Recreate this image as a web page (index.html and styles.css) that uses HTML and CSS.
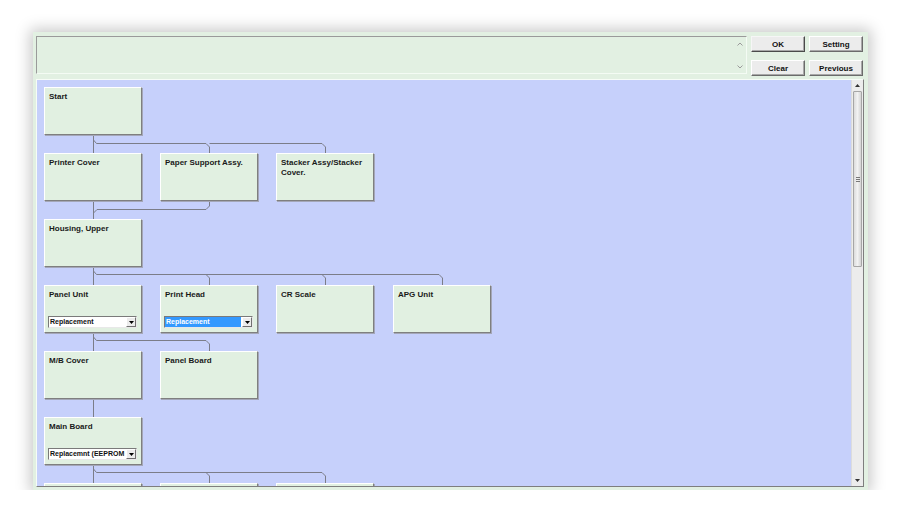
FILE: index.html
```html
<!DOCTYPE html>
<html>
<head>
<meta charset="utf-8">
<link rel="stylesheet" href="styles.css">
</head>
<body>
<div class="window">
  <div class="top-row">
    <div class="msg-box">
      <div class="msg-arrows">
        <svg width="6" height="4" viewBox="0 0 6 4"><path d="M0.5,3.5 L3,1 L5.5,3.5" fill="none" stroke="#9a9a9a" stroke-width="1"/></svg>
        <svg width="6" height="4" viewBox="0 0 6 4"><path d="M0.5,0.5 L3,3 L5.5,0.5" fill="none" stroke="#9a9a9a" stroke-width="1"/></svg>
      </div>
    </div>
    <div class="btn-grid">
      <button class="btn btn-default">OK</button>
      <button class="btn">Setting</button>
      <button class="btn">Clear</button>
      <button class="btn">Previous</button>
    </div>
  </div>
  <div class="canvas-frame">
    <div class="canvas">
      <svg class="links" width="814" height="406" viewBox="0 0 814 406">
        <g fill="none" stroke="#7b7d88" stroke-width="1">
          <path d="M56.5,55 V73 M56.5,60 L59.5,63.5 H169 L172.5,67 V73 M172.5,63.5 H285 L288.5,67 V73"/>
          <path d="M56.5,121 V139 M172.5,121 V126 L169,129.5 H60 L56.5,133"/>
          <path d="M56.5,187 V205 M56.5,191 L59.5,194.5 H402 L405.5,198 V205 M169,194.5 L172.5,198 V205 M285,194.5 L288.5,198 V205"/>
          <path d="M56.5,253 V271 M56.5,257 L59.5,260.5 H169 L172.5,264 V271"/>
          <path d="M56.5,319 V337"/>
          <path d="M56.5,385 V403 M56.5,389 L59.5,392.5 H169 L172.5,396 V403 M169,392.5 H285 L288.5,396 V403"/>
        </g>
      </svg>

      <div class="node c0 r0"><span class="label">Start</span></div>

      <div class="node c0 r1"><span class="label">Printer Cover</span></div>
      <div class="node c1 r1"><span class="label">Paper Support Assy.</span></div>
      <div class="node c2 r1"><span class="label">Stacker Assy/Stacker Cover.</span></div>

      <div class="node c0 r2"><span class="label">Housing, Upper</span></div>

      <div class="node c0 r3"><span class="label">Panel Unit</span>
        <div class="combo"><span class="combo-text">Replacement</span><span class="combo-btn"><svg width="5" height="3" viewBox="0 0 5 3"><path d="M0,0 H5 L2.5,3 Z" fill="#000"/></svg></span></div>
      </div>
      <div class="node c1 r3"><span class="label">Print Head</span>
        <div class="combo"><span class="combo-text selected">Replacement</span><span class="combo-btn"><svg width="5" height="3" viewBox="0 0 5 3"><path d="M0,0 H5 L2.5,3 Z" fill="#000"/></svg></span></div>
      </div>
      <div class="node c2 r3"><span class="label">CR Scale</span></div>
      <div class="node c3 r3"><span class="label">APG Unit</span></div>

      <div class="node c0 r4"><span class="label">M/B Cover</span></div>
      <div class="node c1 r4"><span class="label">Panel Board</span></div>

      <div class="node c0 r5"><span class="label">Main Board</span>
        <div class="combo"><span class="combo-text">Replacemnt (EEPROM Copy)</span><span class="combo-btn"><svg width="5" height="3" viewBox="0 0 5 3"><path d="M0,0 H5 L2.5,3 Z" fill="#000"/></svg></span></div>
      </div>

      <div class="node c0 r6"></div>
      <div class="node c1 r6"></div>
      <div class="node c2 r6"></div>
    </div>
    <div class="vscroll">
      <div class="arrow"><svg width="5" height="3" viewBox="0 0 5 3"><path d="M0,3 H5 L2.5,0 Z" fill="#333"/></svg></div>
      <div class="thumb"><span class="grip"></span></div>
      <div class="track-rest"></div>
      <div class="arrow"><svg width="5" height="3" viewBox="0 0 5 3"><path d="M0,0 H5 L2.5,3 Z" fill="#333"/></svg></div>
    </div>
  </div>
</div>
</body>
</html>
```

FILE: styles.css
```css
* { box-sizing: border-box; }

html, body {
  margin: 0;
  background: #ffffff;
}

body {
  padding: 32px 0 0 33px;
  font-family: "Liberation Sans", Arial, sans-serif;
}

.window {
  width: 835px;
  height: 458px;
  background: #e2f0e2;
  padding: 4px 4px 3px 3px;
  display: flex;
  flex-direction: column;
  gap: 3px;
  box-shadow: 0 0 14px 3px rgba(0, 0, 0, 0.22);
}

.top-row {
  display: flex;
  height: 40px;
  gap: 4px;
}

.msg-box {
  width: 711px;
  height: 38px;
  background: #e2f0e2;
  border: 1px solid;
  border-color: #9a9a9a #f4fbf4 #f4fbf4 #9a9a9a;
  display: flex;
  justify-content: flex-end;
}

.msg-arrows {
  width: 10px;
  display: flex;
  flex-direction: column;
  justify-content: space-between;
  align-items: center;
  padding: 5px 0 4px;
  margin-right: 1px;
}

.msg-arrows svg { display: block; }

.btn-grid {
  display: grid;
  grid-template-columns: 54px 54px;
  grid-template-rows: 16px 16px;
  column-gap: 4px;
  row-gap: 8px;
}

.btn {
  margin: 0;
  padding: 0;
  width: 54px;
  height: 16px;
  background: #ececec;
  border: 1px solid;
  border-color: #ffffff #6b6b6b #6b6b6b #ffffff;
  box-shadow: inset -1px -1px 0 #a8a8a8;
  font-family: "Liberation Sans", Arial, sans-serif;
  font-weight: bold;
  font-size: 8px;
  line-height: 13px;
  color: #111;
  text-align: center;
}

.btn-default {
  border-color: #f6f6f6 #4a4a4a #4a4a4a #f6f6f6;
}

.canvas-frame {
  width: 828px;
  height: 408px;
  display: flex;
  border: 1px solid;
  border-color: #f7fcf7 #7e7e7e #7e7e7e #f7fcf7;
}

.canvas {
  position: relative;
  width: 814px;
  height: 406px;
  background: #c6d0fb;
  overflow: hidden;
}

.links {
  position: absolute;
  left: 0;
  top: 0;
}

.node {
  position: absolute;
  width: 98px;
  height: 48px;
  background: #e1f0e1;
  border: 1px solid;
  border-color: #ffffff #7f7f7f #7f7f7f #ffffff;
  box-shadow: 1px 1px 0 #a4a7b8;
  padding: 4px 4px 4px 3px;
  display: flex;
  flex-direction: column;
}

.c0 { left: 7px; }
.c1 { left: 123px; }
.c2 { left: 239px; }
.c3 { left: 356px; }

.r0 { top: 7px; }
.r1 { top: 73px; }
.r2 { top: 139px; }
.r3 { top: 205px; }
.r4 { top: 271px; }
.r5 { top: 337px; }
.r6 { top: 403px; }

.label {
  font-weight: bold;
  font-size: 8px;
  line-height: 10px;
  color: #1a1a1a;
  padding-left: 1px;
}

.combo {
  margin-top: auto;
  width: 89px;
  height: 12px;
  background: #ffffff;
  border: 1px solid;
  border-color: #7a7a7a #e8e8e8 #e8e8e8 #7a7a7a;
  display: flex;
  align-items: stretch;
  overflow: hidden;
}

.combo-text {
  flex: 1;
  min-width: 0;
  overflow: hidden;
  white-space: nowrap;
  font-weight: bold;
  font-size: 7px;
  line-height: 10px;
  color: #111;
  padding-left: 1px;
}

.combo-text.selected {
  background: #3399ff;
  color: #ffffff;
  margin: 0 1px 0 0;
}

.combo-btn {
  width: 10px;
  flex: none;
  background: #ececec;
  border: 1px solid;
  border-color: #ffffff #707070 #707070 #ffffff;
  display: flex;
  align-items: center;
  justify-content: center;
}

.combo-btn svg { display: block; }

.vscroll {
  width: 12px;
  height: 406px;
  background: #ececec;
  display: flex;
  flex-direction: column;
  align-items: center;
  border-left: 1px solid #dcdcdc;
}

.vscroll .arrow {
  height: 11px;
  width: 100%;
  display: flex;
  align-items: center;
  justify-content: center;
  flex: none;
}

.vscroll .arrow svg { display: block; }

.thumb {
  width: 9px;
  height: 176px;
  flex: none;
  background: linear-gradient(to right, #dcdcdc, #f2f2f2 50%, #d4d4d4);
  border: 1px solid #a6a6a6;
  border-radius: 1px;
  display: flex;
  align-items: center;
  justify-content: center;
}

.grip {
  width: 4px;
  height: 5px;
  border-top: 1px solid #777;
  border-bottom: 1px solid #777;
  background: linear-gradient(#777, #777) center / 4px 1px no-repeat;
}

.track-rest {
  flex: 1;
}
```
